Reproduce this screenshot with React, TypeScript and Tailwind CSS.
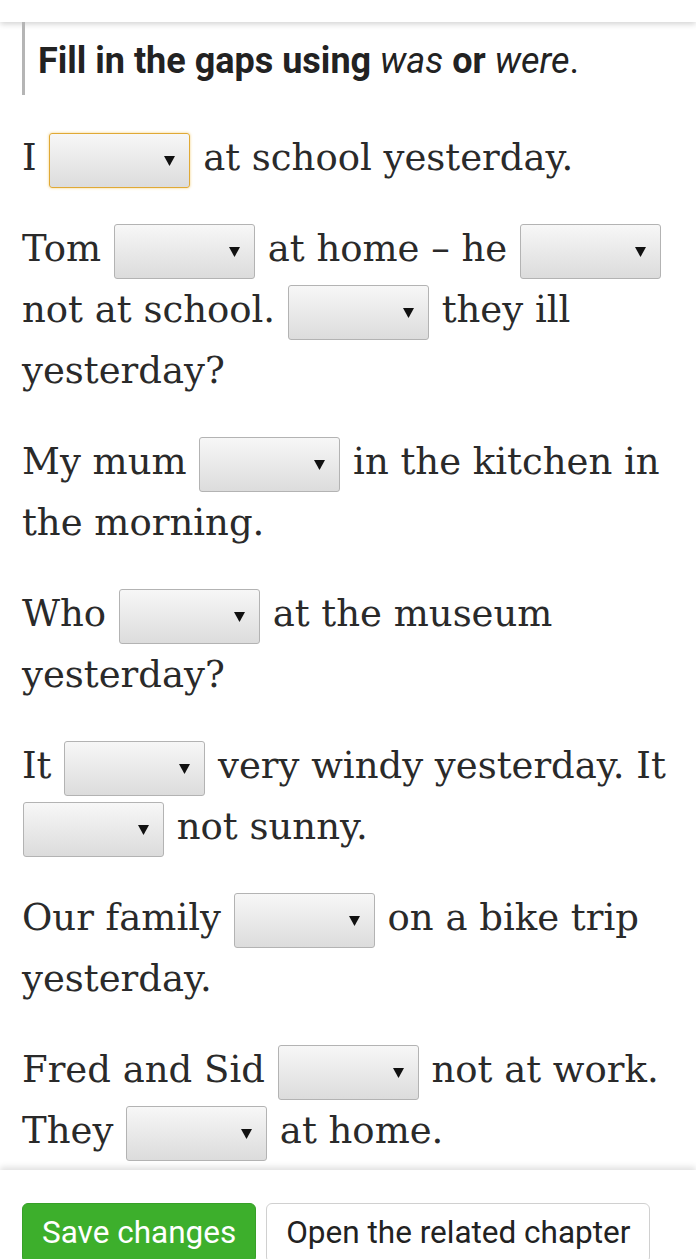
import React from 'react';

const Gap: React.FC<{ focused?: boolean }> = ({ focused }) => (
  <span
    className={
      'inline-flex items-center justify-end align-middle w-[141px] h-[55px] mx-[1px] pr-[14px] rounded-[3px] border bg-gradient-to-b from-[#f7f7f7] to-[#dcdcdc] ' +
      (focused ? 'border-[#e0a935] shadow-[0_0_3px_#f2cf7a]' : 'border-[#b3b3b3]')
    }
  >
    <svg width="11" height="12" viewBox="0 0 11 12">
      <path d="M0 1 L11 1 L5.5 11 Z" fill="#111" />
    </svg>
  </span>
);

const sentences: React.ReactNode[] = [
  <>I <Gap focused /> at school yesterday.</>,
  <>Tom <Gap /> at home – he <Gap /> not at school. <Gap /> they ill yesterday?</>,
  <>My mum <Gap /> in the kitchen in the morning.</>,
  <>Who <Gap /> at the museum yesterday?</>,
  <>It <Gap /> very windy yesterday. It <Gap /> not sunny.</>,
  <>Our family <Gap /> on a bike trip yesterday.</>,
  <>Fred and Sid <Gap /> not at work. They <Gap /> at home.</>,
];

export default function App() {
  return (
    <div className="relative w-[696px] h-[1259px] overflow-hidden bg-white">
      <div className="h-[22px] bg-white shadow-[0_2px_6px_rgba(0,0,0,0.18)]" />
      <div className="ml-[22px] border-l-[3px] border-[#b5b5b5] pl-[13px] pt-[21px] pb-[16px] font-['Roboto',sans-serif] text-[36px] leading-[36px] text-[#222]">
        <b>Fill in the gaps using</b> <i className="font-normal">was</i> <b>or</b> <i>were</i>.
      </div>
      <div className="px-[22px] pt-[32px] font-['DejaVu_Serif',serif] text-[37px] leading-[61px] text-[#2a2a2a]">
        {sentences.map((s, i) => (
          <p key={i} className="mb-[30px]">{s}</p>
        ))}
      </div>
      <div className="absolute left-0 right-0 bottom-0 h-[89px] bg-white shadow-[0_-3px_6px_rgba(0,0,0,0.12)] px-[22px] pt-[33px] flex gap-[10px] font-['Roboto',sans-serif] text-[31.5px]">
        <button className="h-[60px] px-[19px] rounded-[6px] bg-[#3daf2c] border border-[#37a028] text-white">Save changes</button>
        <button className="h-[60px] px-[19px] rounded-[6px] bg-white border border-[#d0d0d0] text-[#222]">Open the related chapter</button>
      </div>
    </div>
  );
}
